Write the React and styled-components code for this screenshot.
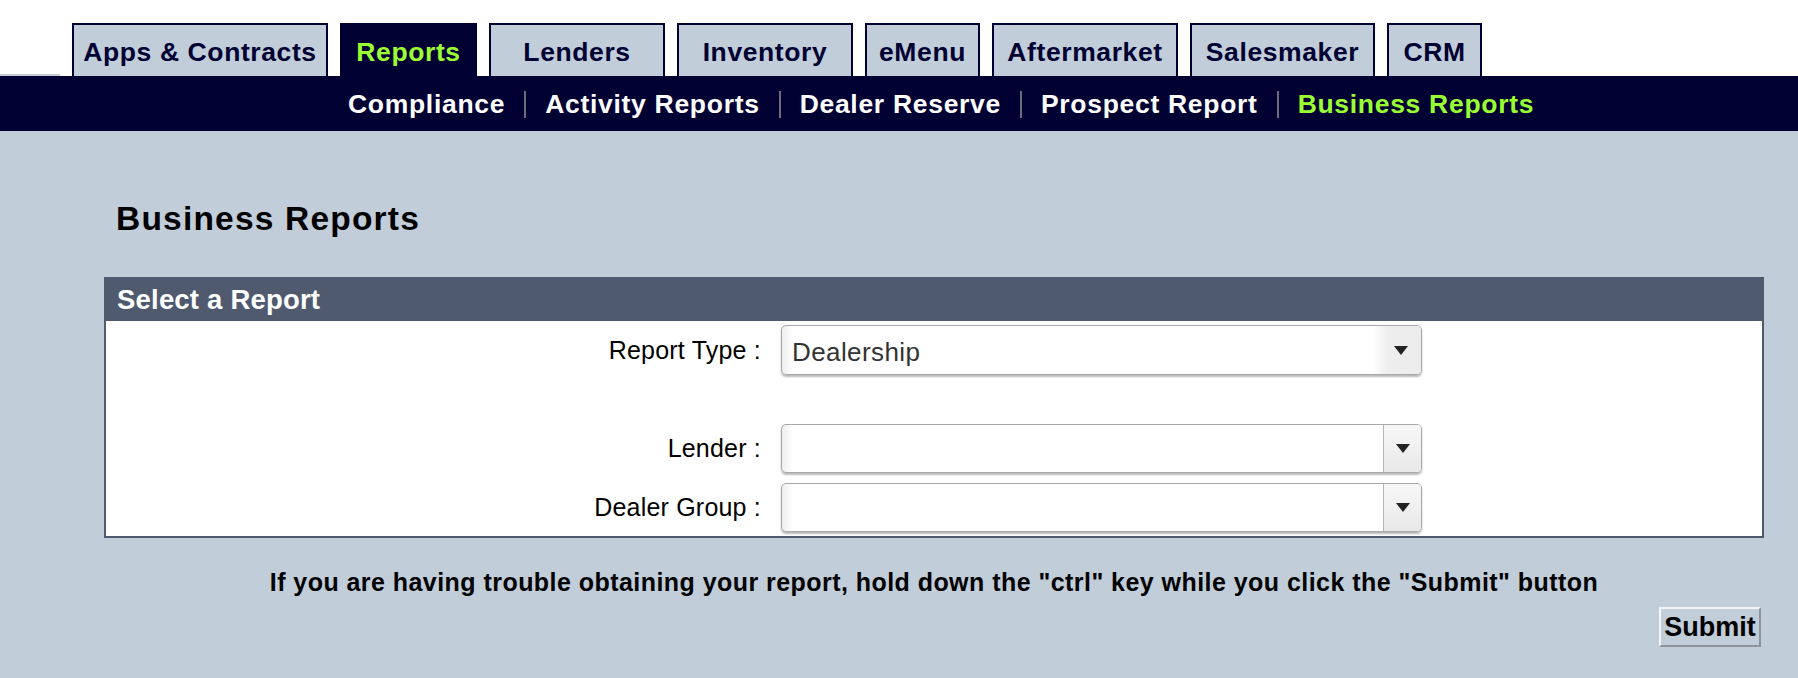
import React from 'react';
import styled, { createGlobalStyle } from 'styled-components';

const GlobalStyle = createGlobalStyle`
    html, body {
        margin: 0;
        padding: 0;
        background: #c1cdd9;
    }

    body {
        font-family: "Liberation Sans", Arial, Helvetica, sans-serif;
    }
`;

const NAVY = '#000033';
const LIME = '#99ff33';
const SLATE = '#4f5a6e';

const TABS = [
    { label: 'Apps & Contracts', width: 256 },
    { label: 'Reports', width: 137, active: true },
    { label: 'Lenders', width: 176 },
    { label: 'Inventory', width: 176 },
    { label: 'eMenu', width: 115 },
    { label: 'Aftermarket', width: 186 },
    { label: 'Salesmaker', width: 185 },
    { label: 'CRM', width: 95 }
];

const SUB_LINKS = [
    { label: 'Compliance' },
    { label: 'Activity Reports' },
    { label: 'Dealer Reserve' },
    { label: 'Prospect Report' },
    { label: 'Business Reports', active: true }
];

const Page = styled.div`
    min-height: 678px;
    background: #c1cdd9;
`;

const TabStrip = styled.div`
    height: 76px;
    background: #fff;
    display: flex;
    align-items: flex-end;
    gap: 12px;
`;

const LeftRule = styled.div`
    width: 60px;
    height: 2px;
    background: #c9cdd3;
`;

const Tab = styled.a`
    box-sizing: border-box;
    width: ${p => p.$width}px;
    height: 53px;
    padding-top: 4px;
    display: flex;
    align-items: center;
    justify-content: center;
    border: 2px solid ${NAVY};
    border-bottom: none;
    background: ${p => (p.$active ? NAVY : '#c1cdd9')};
    color: ${p => (p.$active ? LIME : NAVY)};
    font-size: 26.5px;
    letter-spacing: 0.6px;
    font-weight: 700;
    white-space: nowrap;
    text-decoration: none;
    cursor: pointer;
`;

const SubNav = styled.nav`
    box-sizing: border-box;
    height: 55px;
    background: ${NAVY};
    display: flex;
    align-items: center;
    padding: 2px 0 0 348px;
`;

const SubLink = styled.a`
    color: ${p => (p.$active ? LIME : '#fff')};
    font-size: 26.5px;
    letter-spacing: 0.7px;
    font-weight: 700;
    white-space: nowrap;
    text-decoration: none;
    cursor: pointer;
`;

const Divider = styled.span`
    width: 2px;
    height: 27px;
    margin: 0 19px;
    background: #6d6d78;
`;

const Content = styled.main`
    padding: 68px 34px 0 104px;
`;

const Title = styled.h1`
    margin: 0 0 38px 12px;
    font-size: 33.5px;
    letter-spacing: 1.2px;
    font-weight: 700;
    color: #000;
    line-height: 40px;
`;

const Panel = styled.section`
    border: 2px solid ${SLATE};
    background: #fff;
`;

const PanelHeader = styled.header`
    height: 42px;
    display: flex;
    align-items: center;
    padding-left: 11px;
    background: ${SLATE};
    color: #fff;
    font-size: 27.5px;
    letter-spacing: 0.2px;
    font-weight: 700;
`;

const PanelBody = styled.div`
    display: grid;
    grid-template-columns: 655px 641px;
    column-gap: 20px;
    padding: 4px 0;
`;

const Label = styled.label`
    display: flex;
    align-items: center;
    justify-content: flex-end;
    height: ${p => p.$h}px;
    margin-top: ${p => p.$top || 0}px;
    font-size: 25px;
    letter-spacing: 0.2px;
    color: #000;
    white-space: nowrap;
`;

const SelectBox = styled.div`
    box-sizing: border-box;
    height: ${p => p.$h}px;
    margin-top: ${p => p.$top || 0}px;
    display: flex;
    align-items: stretch;
    border: 1px solid #a8a8a8;
    border-radius: 5px;
    box-shadow: 0 2px 2px rgba(0, 0, 0, 0.28);
    background: linear-gradient(to right, #eeeeee 0, #ffffff 11px);
    overflow: hidden;
    cursor: pointer;
`;

const SelectValue = styled.span`
    flex: 1;
    display: flex;
    align-items: center;
    padding: 4px 0 0 10px;
    font-size: 26px;
    letter-spacing: 0.4px;
    color: #333;
`;

const ArrowZone = styled.span`
    width: ${p => (p.$split ? 38 : 48)}px;
    display: flex;
    align-items: center;
    justify-content: center;
    padding-left: ${p => (p.$split ? 0 : 8)}px;
    box-sizing: border-box;
    border-left: ${p => (p.$split ? '1px solid #b5b5b5' : 'none')};
    background: ${p =>
        p.$split
            ? 'linear-gradient(#f7f7f7, #e9e9e9)'
            : 'linear-gradient(to right, #ffffff, #eeeeee 30%, #ececec)'};
`;

const Arrow = styled.span`
    width: 0;
    height: 0;
    border-left: 7px solid transparent;
    border-right: 7px solid transparent;
    border-top: 9px solid #222;
`;

const Notice = styled.p`
    margin: 31px 0 0;
    text-align: center;
    font-size: 25px;
    letter-spacing: 0.45px;
    font-weight: 700;
    color: #000;
    line-height: 26px;
`;

const Actions = styled.div`
    display: flex;
    justify-content: flex-end;
    padding: 12px 3px 0 0;
`;

const SubmitButton = styled.button`
    box-sizing: border-box;
    width: 102px;
    height: 40px;
    padding: 0;
    border: 2px solid;
    border-color: #f2f4f6 #8e949b #8e949b #f2f4f6;
    background: #c1cdd9;
    font-family: inherit;
    font-size: 27px;
    font-weight: 700;
    color: #000;
    cursor: pointer;
`;

const Select = ({ value, h, top, split }) => (
    <SelectBox $h={h} $top={top}>
        <SelectValue>{value}</SelectValue>
        <ArrowZone $split={split}>
            <Arrow />
        </ArrowZone>
    </SelectBox>
);

const App = () => (
    <Page>
        <GlobalStyle />
        <TabStrip>
            <LeftRule />
            {TABS.map(tab => (
                <Tab key={tab.label} $width={tab.width} $active={tab.active}>
                    {tab.label}
                </Tab>
            ))}
        </TabStrip>
        <SubNav>
            {SUB_LINKS.map((link, i) => (
                <React.Fragment key={link.label}>
                    {i > 0 && <Divider />}
                    <SubLink $active={link.active}>{link.label}</SubLink>
                </React.Fragment>
            ))}
        </SubNav>
        <Content>
            <Title>Business Reports</Title>
            <Panel>
                <PanelHeader>Select a Report</PanelHeader>
                <PanelBody>
                    <Label $h={50}>Report Type :</Label>
                    <Select value="Dealership" h={50} />
                    <Label $h={49} $top={49}>Lender :</Label>
                    <Select h={49} top={49} split />
                    <Label $h={49} $top={10}>Dealer Group :</Label>
                    <Select h={49} top={10} split />
                </PanelBody>
            </Panel>
            <Notice>
                If you are having trouble obtaining your report, hold down the "ctrl" key while you
                click the "Submit" button
            </Notice>
            <Actions>
                <SubmitButton type="button">Submit</SubmitButton>
            </Actions>
        </Content>
    </Page>
);

export default App;
